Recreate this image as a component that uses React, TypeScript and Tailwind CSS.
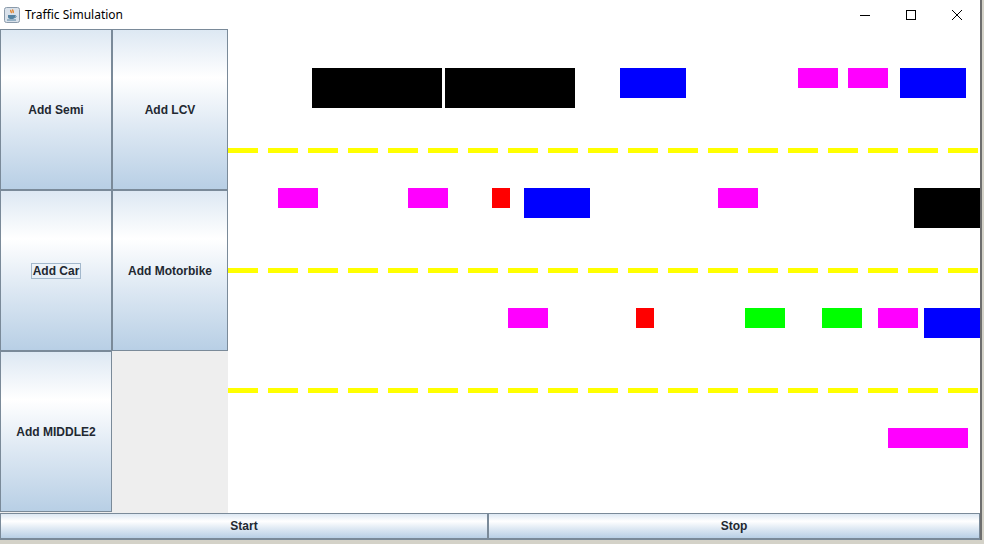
import React from 'react';

type Vehicle = { x: number; y: number; w: number; h: number; color: string };

// positions in page coordinates; canvas origin is (228, 29)
const vehicles: Vehicle[] = [
  { x: 312, y: 68, w: 130, h: 40, color: '#000000' },
  { x: 445, y: 68, w: 130, h: 40, color: '#000000' },
  { x: 620, y: 68, w: 66, h: 30, color: '#0000ff' },
  { x: 798, y: 68, w: 40, h: 20, color: '#ff00ff' },
  { x: 848, y: 68, w: 40, h: 20, color: '#ff00ff' },
  { x: 900, y: 68, w: 66, h: 30, color: '#0000ff' },

  { x: 278, y: 188, w: 40, h: 20, color: '#ff00ff' },
  { x: 408, y: 188, w: 40, h: 20, color: '#ff00ff' },
  { x: 492, y: 188, w: 18, h: 20, color: '#ff0000' },
  { x: 524, y: 188, w: 66, h: 30, color: '#0000ff' },
  { x: 718, y: 188, w: 40, h: 20, color: '#ff00ff' },
  { x: 914, y: 188, w: 66, h: 40, color: '#000000' },

  { x: 508, y: 308, w: 40, h: 20, color: '#ff00ff' },
  { x: 636, y: 308, w: 18, h: 20, color: '#ff0000' },
  { x: 745, y: 308, w: 40, h: 20, color: '#00ff00' },
  { x: 822, y: 308, w: 40, h: 20, color: '#00ff00' },
  { x: 878, y: 308, w: 40, h: 20, color: '#ff00ff' },
  { x: 924, y: 308, w: 56, h: 30, color: '#0000ff' },

  { x: 888, y: 428, w: 80, h: 20, color: '#ff00ff' },
];

const laneLines = [148, 268, 388];

const btnBg =
  'bg-[linear-gradient(180deg,#dde8f3_0%,#ffffff_30%,#dde8f3_62%,#b8cfe5_100%)]';

const SideButton = ({ label, focused }: { label: string; focused?: boolean }) => (
  <div
    className={`flex items-center justify-center border border-[#7a8a99] ${btnBg} text-[12px] font-bold text-[#222831]`}
  >
    {focused ? (
      <span className="border border-[#a3b8cc] px-[1px] leading-[14px]">{label}</span>
    ) : (
      <span className="leading-[14px]">{label}</span>
    )}
  </div>
);

const JavaIcon = () => (
  <svg width="16" height="16" viewBox="0 0 16 16">
    <rect x="0.5" y="0.5" width="15" height="15" rx="2" fill="#d9e1ea" stroke="#8a9aaa" />
    <path d="M7 3c-1 1 1 2 0 3M9 2.5c-1 1.2 1 2 0 3.5" stroke="#e76f00" strokeWidth="1.2" fill="none" />
    <path d="M4 8h7v2c0 1.5-1.5 2-3.5 2S4 11.5 4 10z" fill="#5382a1" />
    <path d="M11 8.5c1.5 0 1.5 2 0 2" stroke="#5382a1" fill="none" />
    <path d="M3 13h9" stroke="#5382a1" />
  </svg>
);

const App = () => {
  return (
    <div
      className="flex w-[984px] h-[544px] overflow-hidden bg-[#d4d2c8]"
      style={{ fontFamily: '"Liberation Sans", Arial, sans-serif' }}
    >
      <div className="flex flex-col w-[980px] h-[540px] bg-white">
        {/* title bar */}
        <div className="flex items-center h-[29px] shrink-0 bg-white pl-[4px]">
          <JavaIcon />
          <span
            className="ml-[5px] text-[12px] text-black"
            style={{ fontFamily: '"Noto Sans", "Open Sans", sans-serif' }}
          >
            Traffic Simulation
          </span>
          <div className="ml-auto flex h-full">
            <div className="flex w-[46px] items-center justify-center">
              <svg width="10" height="10" viewBox="0 0 10 10">
                <path d="M0 5.5h10" stroke="#000" strokeWidth="1" />
              </svg>
            </div>
            <div className="flex w-[46px] items-center justify-center">
              <svg width="10" height="10" viewBox="0 0 10 10">
                <rect x="0.5" y="0.5" width="9" height="9" stroke="#000" fill="none" />
              </svg>
            </div>
            <div className="flex w-[46px] items-center justify-center">
              <svg width="10" height="10" viewBox="0 0 10 10">
                <path d="M0 0L10 10M10 0L0 10" stroke="#000" strokeWidth="1" />
              </svg>
            </div>
          </div>
        </div>

        {/* main area */}
        <div className="flex h-[484px] shrink-0">
          <div className="grid w-[228px] grid-cols-[112px_116px] grid-rows-[161px_161px_161px] bg-[#eeeeee]">
            <SideButton label="Add Semi" />
            <SideButton label="Add LCV" />
            <SideButton label="Add Car" focused />
            <SideButton label="Add Motorbike" />
            <SideButton label="Add MIDDLE2" />
            <div className="bg-[#eeeeee]" />
          </div>
          <div className="relative flex-1 bg-white">
            {laneLines.map(y => (
              <div
                key={y}
                className="absolute left-0 right-0 h-[5px] bg-[repeating-linear-gradient(90deg,#ffff00_0px,#ffff00_30px,transparent_30px,transparent_40px)]"
                style={{ top: y - 29 }}
              />
            ))}
            {vehicles.map((v, i) => (
              <div
                key={i}
                className="absolute"
                style={{ left: v.x - 228, top: v.y - 29, width: v.w, height: v.h, background: v.color }}
              />
            ))}
          </div>
        </div>

        {/* bottom buttons */}
        <div className="flex h-[27px] shrink-0 text-[12px] font-bold text-[#222831]">
          <div className={`flex w-[489px] items-center justify-center border border-b-2 border-r-2 border-[#7a8a99] ${btnBg}`}>
            Start
          </div>
          <div className={`flex flex-1 items-center justify-center border border-b-2 border-l-0 border-[#7a8a99] ${btnBg}`}>
            Stop
          </div>
        </div>
      </div>
      <div className="w-[2px] h-[540px] bg-[#6e6e6e]" />
    </div>
  );
};

export default App;
